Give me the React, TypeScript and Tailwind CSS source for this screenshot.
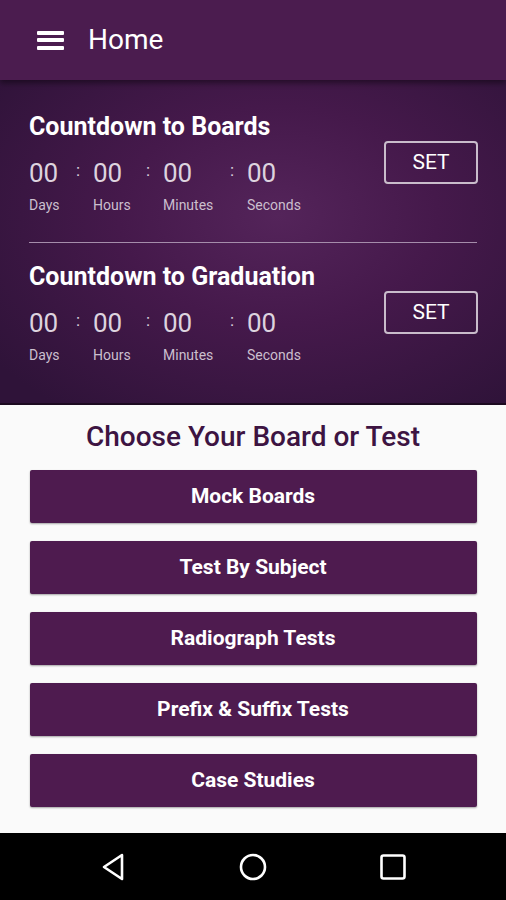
import React from "react";

const tests = [
  "Mock Boards",
  "Test By Subject",
  "Radiograph Tests",
  "Prefix & Suffix Tests",
  "Case Studies",
];

const Countdown: React.FC<{ title: string }> = ({ title }) => {
  return (
    <div className="flex items-center justify-between">
      <div>
        <h2 className="text-[25px] leading-[29px] font-bold text-white">
          {title}
        </h2>
        <div className="flex items-start mt-[17px] text-[26px] leading-[30px] text-[#ddd3df]">
          <span className="w-[47px]">00</span>
          <span className="w-[17px] text-[17px] leading-[24px]">:</span>
          <span className="w-[53px]">00</span>
          <span className="w-[17px] text-[17px] leading-[24px]">:</span>
          <span className="w-[67px]">00</span>
          <span className="w-[17px] text-[17px] leading-[24px]">:</span>
          <span>00</span>
        </div>
        <div className="flex mt-[9px] text-[14px] leading-[16px] text-[#cbbfce]">
          <span className="w-[64px]">Days</span>
          <span className="w-[70px]">Hours</span>
          <span className="w-[84px]">Minutes</span>
          <span>Seconds</span>
        </div>
      </div>
      <button className="w-[94px] h-[43px] mr-[-1px] border-2 border-[#c9bccb] rounded-[4px] text-white text-[21px] leading-none">
        SET
      </button>
    </div>
  );
};

export default function App() {
  return (
    <div
      className="w-[506px] h-[900px] flex flex-col bg-[#fafafa] overflow-hidden"
      style={{ fontFamily: "Roboto, 'Noto Sans', sans-serif" }}
    >
      <header className="h-[80px] shrink-0 bg-[#4b1c4f] flex items-center pl-[37px] relative z-10 shadow-[0_3px_6px_rgba(0,0,0,0.45)]">
        <div className="flex flex-col gap-[3.5px] w-[27px]">
          <span className="h-[4px] bg-white rounded-[1px]" />
          <span className="h-[4px] bg-white rounded-[1px]" />
          <span className="h-[4px] bg-white rounded-[1px]" />
        </div>
        <span className="ml-[24px] text-white text-[28px] leading-none pb-[1px]">
          Home
        </span>
      </header>

      <section className="h-[325px] shrink-0 px-[29px] pt-[32px] bg-[radial-gradient(ellipse_70%_75%_at_55%_42%,#54245a_0%,#45194b_45%,#2f1339_100%)] border-b-2 border-[#1c0a20]">
        <Countdown title="Countdown to Boards" />
        <div className="h-[1px] bg-[#a58dab] mt-[29px] mb-[19px]" />
        <Countdown title="Countdown to Graduation" />
      </section>

      <main className="flex-1 flex flex-col items-center pt-[16px]">
        <h1 className="text-[28px] leading-[32px] font-medium text-[#3d1442]">
          Choose Your Board or Test
        </h1>
        <div className="flex flex-col gap-[18px] mt-[17px] w-[447px]">
          {tests.map((t) => (
            <button
              key={t}
              className="h-[53px] bg-[#4e1b4f] rounded-[2px] shadow-[0_1px_2px_rgba(0,0,0,0.35)] text-white text-[21px] font-bold"
            >
              {t}
            </button>
          ))}
        </div>
      </main>

      <nav className="h-[67px] shrink-0 bg-black flex items-center justify-between px-[99px]">
        <svg width="28" height="30" viewBox="0 0 28 30">
          <path
            d="M23 3 L5 15 L23 27 Z"
            fill="none"
            stroke="white"
            strokeWidth="2.6"
            strokeLinejoin="round"
          />
        </svg>
        <svg width="30" height="30" viewBox="0 0 30 30">
          <circle cx="15" cy="15" r="12" fill="none" stroke="white" strokeWidth="2.6" />
        </svg>
        <svg width="28" height="28" viewBox="0 0 28 28">
          <rect x="2.5" y="2.5" width="23" height="23" rx="2" fill="none" stroke="white" strokeWidth="2.6" />
        </svg>
      </nav>
    </div>
  );
}
